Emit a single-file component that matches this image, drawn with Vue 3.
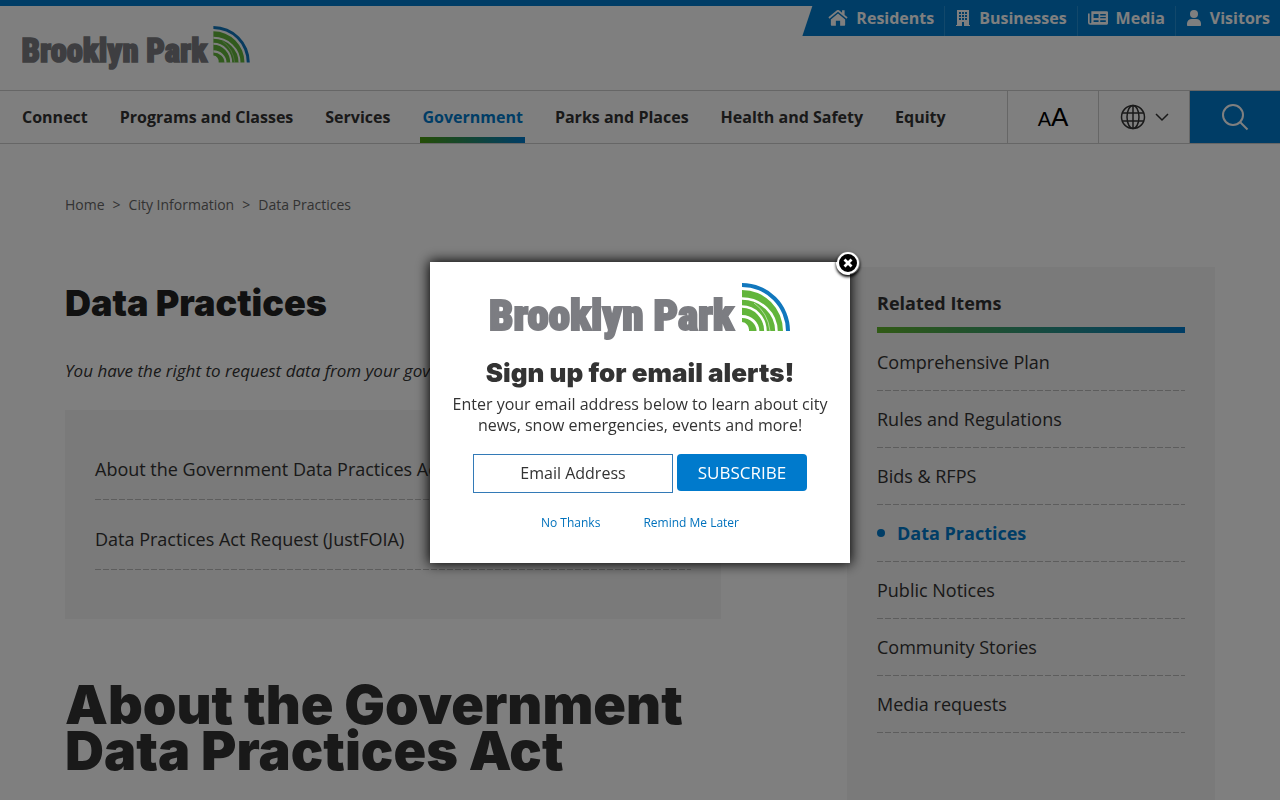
<script setup>
import { ref } from "vue";

const audiences = [
  { name: "Residents", icon: "house", box: "1 1 18 15" },
  { name: "Businesses", icon: "building", box: "2 0 16 16" },
  { name: "Media", icon: "news", box: "1 1 18 14" },
  { name: "Visitors", icon: "user", box: "2 0 16 16" },
];
const sections = [
  "Connect",
  "Programs and Classes",
  "Services",
  "Government",
  "Parks and Places",
  "Health and Safety",
  "Equity",
];
const activeSection = ref("Government");
const crumbs = ["Home", "City Information", "Data Practices"];
const pageLinks = [
  "About the Government Data Practices Act",
  "Data Practices Act Request (JustFOIA)",
];
const related = [
  "Comprehensive Plan",
  "Rules and Regulations",
  "Bids & RFPS",
  "Data Practices",
  "Public Notices",
  "Community Stories",
  "Media requests",
];
const activeRelated = ref("Data Practices");
const showSignup = ref(true);
const email = ref("");
</script>

<template>
  <div class="page">
    <!-- shared logo, used by the header and the dialog -->
    <svg class="symbols" aria-hidden="true">
      <symbol id="logo" viewBox="0 0 300 58">
        <text class="logo-text" x="-1" y="47">Brooklyn Park</text>
        <path d="M252 0a48 48 0 0 1 48 48h-4a44 44 0 0 0-44-44z" fill="#1177bd" />
        <path d="M252 7a41 41 0 0 1 41 41h-34a7.500 8 0 0 0-7-9z" fill="#62b53b" />
        <g fill="none" stroke="#fff">
          <path d="M252 15.500a34.500 33 0 0 1 34.500 33" stroke-width="2.600" />
          <path d="M252 23.500a23.500 25 0 0 1 23.500 25" stroke-width="2.600" />
          <path d="M252 33.500a16 15 0 0 1 16 15" stroke-width="2.800" />
          <path d="M264 20q14 10 16 28" stroke-width="0.500" />
        </g>
      </symbol>
    </svg>

    <header class="header">
      <div class="topline"></div>
      <div class="brand-row">
        <a class="brand" href="#" aria-label="Brooklyn Park">
          <svg class="brand-logo"><use href="#logo" /></svg>
        </a>
        <nav class="audiences" aria-label="Audiences">
          <a v-for="a in audiences" :key="a.name" href="#" class="audience">
            <svg
              class="audience-icon"
              :class="a.icon"
              :viewBox="a.box"
              fill="currentColor"
              aria-hidden="true"
            >
              <template v-if="a.icon === 'house'">
                <path d="M10 4.300 3.300 9.800V15c0 .4.300.700.700.700h4V11h4v4.700h4c.4 0 .7-.3.7-.7V9.800z" />
                <path d="M19 7.900 16.200 5.600V1.300h-2.400v2.300l-2.800-2.300a1.600 1.600 0 0 0-2 0L1 7.900l1 1.200 8-6.500 8 6.500z" />
              </template>
              <path
                v-else-if="a.icon === 'building'"
                fill-rule="evenodd"
                d="M4 0h12v15h1v1h-6v-4H9v4H3v-1h1zM6 2v2h2V2zm3 0v2h2V2zm3 0v2h2V2zM6 5v2h2V5zm3 0v2h2V5zm3 0v2h2V5zM6 8v2h2V8zm3 0v2h2V8zm3 0v2h2V8z"
              />
              <path
                v-else-if="a.icon === 'news'"
                fill-rule="evenodd"
                d="M4 2h14q1 0 1 1v10q0 1-1 1H3q-2 0-2-2V4h1.500v8q0 .7.700.700T4 12zM6 4.500v3.500h4.500V4.500zM12 4.500v1.300h5V4.500zM12 7v1.300h5V7zM6 10v1.500h4.500V10zM12 10v1.500h5V10z"
              />
              <g v-else>
                <circle cx="10" cy="4" r="4" />
                <path d="M7.800 9h4.400c2.800 0 4.800 2 4.800 4.600V15c0 .6-.4 1-1 1H4c-.6 0-1-.4-1-1v-1.400C3 11 5 9 7.800 9z" />
              </g>
            </svg>
            {{ a.name }}
          </a>
        </nav>
      </div>

      <div class="nav-row">
        <nav class="sections" aria-label="Main">
          <a
            v-for="s in sections"
            :key="s"
            href="#"
            class="section"
            :class="{ active: s === activeSection }"
            >{{ s }}</a
          >
        </nav>
        <button class="tool tool-size" aria-label="Text size">
          <span class="small-a">A</span><span class="large-a">A</span>
        </button>
        <button class="tool" aria-label="Language">
          <svg width="26" height="26" viewBox="0 0 26 26" class="line-icon">
            <circle cx="13" cy="13" r="11.500" />
            <ellipse cx="13" cy="13" rx="6" ry="11.500" />
            <path d="M13 1.500v23M2.500 9h21M2.500 17h21" />
          </svg>
          <svg width="14" height="10" viewBox="0 0 14 10" class="line-icon chevron">
            <path d="m1 2 6 6 6-6" />
          </svg>
        </button>
        <button class="tool tool-search" aria-label="Search">
          <svg width="28" height="28" viewBox="0 0 28 28" class="line-icon search">
            <circle cx="12" cy="12" r="10" />
            <path d="m19 19 7.500 7.500" />
          </svg>
        </button>
      </div>
    </header>

    <main class="content">
      <nav class="crumbs" aria-label="Breadcrumb">
        <template v-for="(c, i) in crumbs" :key="c">
          <span v-if="i">&gt;</span>
          <a href="#">{{ c }}</a>
        </template>
      </nav>

      <div class="columns">
        <article class="article">
          <h1>Data Practices</h1>
          <p class="intro">
            You have the right to request data from your government.
          </p>
          <ul class="page-links">
            <li v-for="l in pageLinks" :key="l">
              <a href="#">{{ l }}</a>
            </li>
          </ul>
          <h2>About the Government Data Practices Act</h2>
        </article>

        <aside class="related">
          <h3>Related Items</h3>
          <ul>
            <li v-for="r in related" :key="r">
              <a href="#" :class="{ current: r === activeRelated }">{{ r }}</a>
            </li>
          </ul>
        </aside>
      </div>
    </main>

    <div v-if="showSignup" class="overlay">
      <div class="dialog" role="dialog" aria-labelledby="signup-title">
        <button class="close" aria-label="Close" @click="showSignup = false">
          <svg width="24" height="24" viewBox="0 0 24 24">
            <circle cx="12" cy="12" r="10" fill="#000" stroke="#fff" stroke-width="2" />
            <path d="m8.500 8.500 7 7m0-7-7 7" stroke="#fff" stroke-width="2.800" />
          </svg>
        </button>
        <svg class="dialog-logo" role="img" aria-label="Brooklyn Park">
          <use href="#logo" />
        </svg>
        <h2 id="signup-title">Sign up for email alerts!</h2>
        <p>
          Enter your email address below to learn about city news, snow
          emergencies, events and more!
        </p>
        <form class="signup" @submit.prevent="showSignup = false">
          <input
            v-model="email"
            type="email"
            aria-label="Email Address"
            placeholder="Email Address"
          />
          <button type="submit">SUBSCRIBE</button>
        </form>
        <div class="choices">
          <a href="#" @click.prevent="showSignup = false">No Thanks</a>
          <a href="#" @click.prevent="showSignup = false">Remind Me Later</a>
        </div>
      </div>
    </div>
  </div>
</template>

<style>
body {
  overflow: hidden;
}
</style>

<style scoped>
.page {
  min-height: 100vh;
  background: #fff;
  color: #333;
  font-family: "Open Sans", sans-serif;
  font-size: 16px;
}

.page * {
  box-sizing: border-box;
}

a {
  color: inherit;
  text-decoration: none;
}

button,
input {
  font: inherit;
}

ul {
  list-style: none;
  margin: 0;
  padding: 0;
}

h1,
h2,
h3,
p {
  margin: 0;
}

h1,
h2 {
  font-family: Inter, sans-serif;
  font-weight: 900;
}

.symbols {
  position: absolute;
  width: 0;
  height: 0;
}

.logo-text {
  font-family: "Roboto Condensed", Roboto, sans-serif;
  font-size: 43px;
  font-weight: 900;
  fill: #7c7d82;
  stroke: #7c7d82;
  stroke-width: 2px;
}

/* header */
.topline {
  height: 6px;
  background: #007acc;
}

.brand-row {
  display: flex;
  justify-content: space-between;
  align-items: flex-start;
  height: 84px;
}

.brand {
  padding: 20px 22px;
}

.brand-logo {
  display: block;
  width: 228px;
  height: 44px;
}

.audiences {
  display: flex;
  height: 30px;
  padding-left: 16px;
  background: #007acc;
  clip-path: polygon(10px 0, 100% 0, 100% 100%, 0 100%);
}

.audience {
  display: flex;
  align-items: center;
  gap: 8px;
  padding: 0 10px 6px;
  color: #fff;
  font-weight: 700;
}

.audience + .audience {
  border-left: 1px solid #2590d6;
}

.audience-icon {
  width: 20px;
  height: 16px;
}

.audience-icon.building,
.audience-icon.user {
  width: 16px;
}

.nav-row {
  display: flex;
  height: 54px;
  border-top: 1px solid #ccc;
  border-bottom: 1px solid #ccc;
}

.sections {
  display: flex;
  flex: 1;
  gap: 28px;
  padding-left: 20px;
}

.section {
  padding: 0 2px;
  line-height: 52px;
  font-weight: 700;
  white-space: nowrap;
}

.section.active {
  position: relative;
  color: #007acc;
}

.section.active::after {
  content: "";
  position: absolute;
  left: 0;
  right: 0;
  bottom: 0;
  height: 6px;
  background: linear-gradient(90deg, #4a9c0d, #007acc);
}

.tool {
  display: flex;
  align-items: center;
  justify-content: center;
  gap: 9px;
  width: 91px;
  padding: 0;
  border: 0;
  border-left: 1px solid #ccc;
  background: none;
}

.tool-size {
  align-items: baseline;
  gap: 0;
  color: #000;
  font-family: "Liberation Sans", sans-serif;
  line-height: 52px;
}

.small-a {
  font-size: 20px;
}

.large-a {
  font-size: 26px;
}

.tool-search {
  background: #007acc;
}

.line-icon {
  fill: none;
  stroke: #333;
  stroke-width: 1.5px;
}

.search {
  stroke: #fff;
  stroke-width: 2px;
}

/* page content */
.content {
  padding: 0 65px;
}

.crumbs {
  display: flex;
  gap: 8px;
  padding-top: 50px;
  color: #666;
  font-size: 14px;
  line-height: 22px;
}

.columns {
  display: flex;
  justify-content: space-between;
  align-items: flex-start;
  padding-top: 51px;
}

.article {
  width: 57%;
}

h1 {
  padding-top: 16px;
  color: #222;
  font-size: 36px;
  line-height: 40px;
}

.intro {
  padding: 36px 0 27px;
  font-size: 17px;
  font-style: italic;
  line-height: 24px;
  white-space: nowrap;
}

.page-links {
  padding: 20px 30px 49px;
  background: #f4f4f4;
  font-size: 18px;
}

.page-links li,
.related li {
  padding: 27px 0 19px;
  background: repeating-linear-gradient(90deg, #bbb 0 6px, transparent 6px 8px)
    left bottom / 100% 1px no-repeat;
  line-height: 24px;
}

.article h2 {
  padding-top: 63px;
  font-size: 54px;
  line-height: 46px;
}

.related {
  width: 32%;
  min-height: 560px;
  padding: 24px 30px;
  background: #f4f4f4;
  font-size: 18px;
}

.related h3 {
  padding-bottom: 12px;
  border-bottom: 6px solid;
  border-image: linear-gradient(90deg, #62b52b, #007acc) 1;
  font-size: 18px;
  line-height: 24px;
}

.related ul {
  padding-top: 1px;
}

.related li {
  padding: 16px 0 17px;
}

.current {
  display: flex;
  align-items: center;
  gap: 12px;
  color: #007acc;
  font-weight: 700;
}

.current::before {
  content: "";
  width: 8px;
  height: 8px;
  border-radius: 50%;
  background: #007acc;
}

/* sign-up dialog */
.overlay {
  position: fixed;
  inset: 0;
  padding-top: 262px;
  background: rgba(0, 0, 0, 0.5);
}

.dialog {
  position: relative;
  width: 420px;
  margin: 0 auto;
  padding: 21px 20px 30px;
  background: #fff;
  box-shadow: 0 0 12px 1px #000;
  text-align: center;
}

.close {
  position: absolute;
  top: -11px;
  right: -10px;
  width: 24px;
  height: 24px;
  padding: 0;
  border: 0;
  border-radius: 50%;
  background: none;
  box-shadow: 0 2px 3px #000;
}

.close svg {
  display: block;
}

.dialog-logo {
  display: block;
  width: 300px;
  height: 58px;
  margin: 0 auto;
}

.dialog h2 {
  padding-top: 16px;
  font-size: 26px;
  line-height: 32px;
}

.dialog p {
  padding-top: 5px;
  line-height: 21px;
}

.signup {
  display: flex;
  justify-content: center;
  align-items: flex-start;
  gap: 4px;
  padding-top: 18px;
}

.signup input {
  width: 200px;
  height: 39px;
  padding: 0 10px 2px;
  border: 1px solid #337ab7;
  background: #fff;
  color: #333;
  text-align: center;
}

.signup input::placeholder {
  color: #333;
  opacity: 1;
}

.signup button {
  width: 130px;
  height: 37px;
  padding: 0;
  border: 0;
  border-radius: 4px;
  background: #007acc;
  color: #fff;
  font-size: 17px;
}

.choices {
  display: flex;
  justify-content: center;
  gap: 43px;
  padding-top: 20px;
  color: #0071bc;
  font-size: 12px;
  line-height: 20px;
}
</style>
